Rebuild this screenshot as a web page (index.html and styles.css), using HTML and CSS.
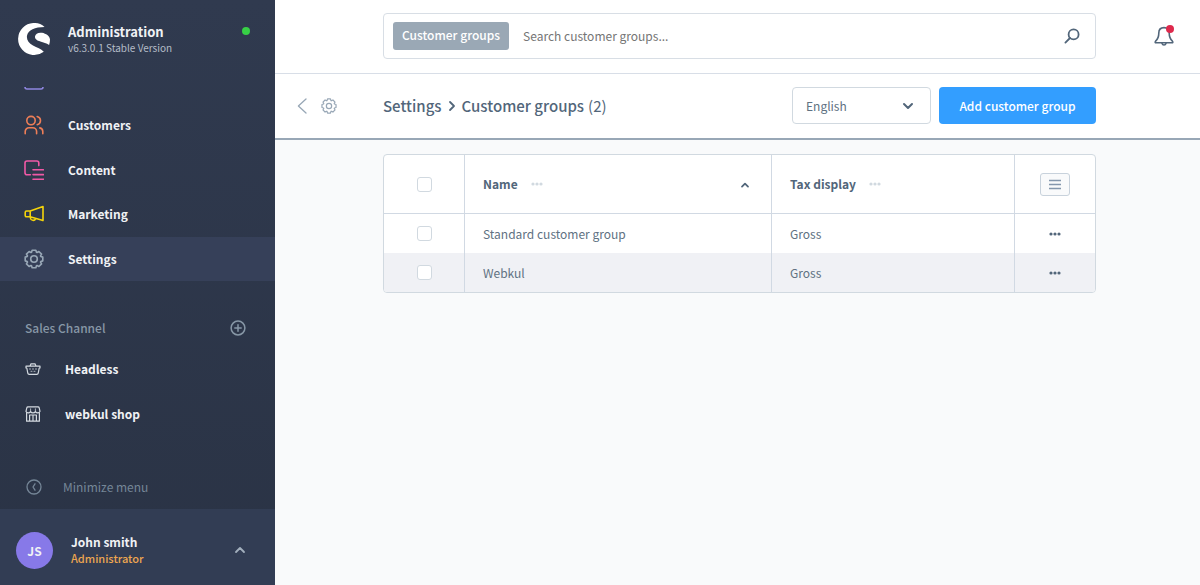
FILE: index.html
```html
<!DOCTYPE html>
<html lang="en">
  <head>
    <meta charset="UTF-8" />
    <meta name="viewport" content="width=device-width, initial-scale=1.0" />
    <title>Customer groups | Administration</title>
    <link rel="stylesheet" href="styles.css">
  </head>

  <body>
    <!-- Icons used more than once -->
    <svg class="sprite" aria-hidden="true">
      <symbol id="icon-gear" viewBox="0 0 20 20">
        <path d="M8.13 1.2 L11.87 1.2 L12.46 3.23 L13.04 3.47 L14.9 2.45 L17.55 5.1 L16.53 6.96 L16.77 7.54 L18.8 8.13 L18.8 11.87 L16.77 12.46 L16.53 13.04 L17.55 14.9 L14.9 17.55 L13.04 16.53 L12.46 16.77 L11.87 18.8 L8.13 18.8 L7.54 16.77 L6.96 16.53 L5.1 17.55 L2.45 14.9 L3.47 13.04 L3.23 12.46 L1.2 11.87 L1.2 8.13 L3.23 7.54 L3.47 6.96 L2.45 5.1 L5.1 2.45 L6.96 3.47 L7.54 3.23 Z" />
        <circle cx="10" cy="10" r="3.3" />
      </symbol>
      <symbol id="icon-dots" viewBox="0 0 12 4">
        <circle cx="2" cy="2" r="1.6" />
        <circle cx="6" cy="2" r="1.6" />
        <circle cx="10" cy="2" r="1.6" />
      </symbol>
    </svg>

    <div class="admin">
      <!-- Sidebar -->
      <aside class="sidebar">
        <div class="brand">
          <svg class="brand-logo" viewBox="0 0 32 32">
            <path d="M26.6 3.9 A16 16 0 1 0 25.8 28.7 C23 26 19 24.6 15 22.6 C10.5 20.4 8.4 16.5 9 12.8 C10 7 17 4 26.6 3.9 Z" />
            <path d="M17 13.4 C17.4 10.6 20.5 9.2 24 9.8 C28 10.6 31.8 13 32 16.6 C32 18.6 31.7 20.4 31.1 22 C28.5 20.1 25.5 19.2 22.4 18.4 C19 17.4 16.8 16 17 13.4 Z" />
          </svg>
          <div class="brand-text">
            <strong>Administration</strong>
            <span>v6.3.0.1 Stable Version</span>
          </div>
          <span class="status"></span>
        </div>

        <nav>
          <ul class="menu">
            <li class="menu-cut">
              <svg class="icon catalogue" viewBox="0 0 20 20"><rect x="1" y="1" width="18" height="18" rx="2" /></svg>
            </li>
            <li>
              <a href="#">
                <svg class="icon customers" viewBox="0 0 20 20">
                  <circle cx="7" cy="5.6" r="4.2" />
                  <path d="M1.2 18.8 V16.6 A3.8 3.8 0 0 1 5 12.8 H8.8 A3.8 3.8 0 0 1 12.6 16.6 V18.8 M13.2 1.5 A4.2 4.2 0 0 1 13.2 9.7 M15.8 12.9 A3.8 3.8 0 0 1 18.8 16.6 V18.8" />
                </svg>
                Customers
              </a>
            </li>
            <li>
              <a href="#">
                <svg class="icon content" viewBox="0 0 20 20">
                  <path d="M6.4 14.8 H3 A2 2 0 0 1 1 12.8 V3 A2 2 0 0 1 3 1 H12.8 A2 2 0 0 1 14.8 3 V5.6 M9 9.8 H19.4 M9 14.6 H19.4 M9 19.2 H19.4" />
                </svg>
                Content
              </a>
            </li>
            <li>
              <a href="#">
                <svg class="icon marketing" viewBox="0 0 20 20">
                  <path d="M6.2 7 L19 2.6 V16.6 L6.2 12.8 Z M6.2 7 H2.6 A1.4 1.4 0 0 0 1.2 8.4 V11.4 A1.4 1.4 0 0 0 2.6 12.8 H6.2 M6.4 12.8 V14 A2.7 2.7 0 0 0 11.6 14.6" />
                </svg>
                Marketing
              </a>
            </li>
            <li class="active">
              <a href="#">
                <svg class="icon settings"><use href="#icon-gear" /></svg>
                Settings
              </a>
            </li>
          </ul>
        </nav>

        <div class="channels-head">
          <h2>Sales Channel</h2>
          <button type="button" aria-label="Add sales channel">
            <svg viewBox="0 0 16 16"><circle cx="8" cy="8" r="6.9" /><path d="M8 4.8 V11.2 M4.8 8 H11.2" /></svg>
          </button>
        </div>
        <ul class="channels">
          <li>
            <a href="#">
              <svg viewBox="0 0 16 16">
                <path d="M1 5.2 H15 V7 H14.2 L13.2 12.2 A1.4 1.4 0 0 1 11.8 13.4 H4.2 A1.4 1.4 0 0 1 2.8 12.2 L1.8 7 H1 Z M5 5 L6 2.8 H10 L11 5" />
                <path class="thin" d="M4.5 8 H5.5 M7.5 8 H8.5 M10.5 8 H11.5 M6 10.3 H7 M9 10.3 H10" />
              </svg>
              Headless
            </a>
          </li>
          <li>
            <a href="#">
              <svg viewBox="0 0 16 16">
                <path d="M1.6 6.8 V15.2 H14.4 V6.8 M1 5.4 L1.8 1.8 Q2 .8 3 .8 H13 Q14 .8 14.2 1.8 L15 5.4 Q14.4 6.9 12.8 6.9 Q11.2 6.9 10.4 5.6 Q9.6 6.9 8 6.9 Q6.4 6.9 5.6 5.6 Q4.8 6.9 3.2 6.9 Q1.6 6.9 1 5.4 M4.6 15 V9 H11.4 V15 M8 9 V15" />
                <path class="thin" d="M5.6 2.8 V5.4 M10.4 2.8 V5.4" />
              </svg>
              webkul shop
            </a>
          </li>
        </ul>

        <button class="minimize" type="button">
          <svg viewBox="0 0 16 16"><circle cx="8" cy="8" r="7" /><path d="M9 4.8 L7 8 L9 11.2" /></svg>
          Minimize menu
        </button>

        <button class="user" type="button">
          <span class="avatar">JS</span>
          <span class="user-text">
            <strong>John smith</strong>
            <span>Administrator</span>
          </span>
          <svg viewBox="0 0 12 8"><path d="M2 6 L6 2 L10 6" /></svg>
        </button>
      </aside>

      <!-- Main area -->
      <div class="page">
        <header class="topbar">
          <form class="search">
            <label for="search">Customer groups</label>
            <input type="text" id="search" placeholder="Search customer groups..." />
            <button type="submit" aria-label="Search">
              <svg viewBox="0 0 16 16"><circle cx="9.6" cy="6.4" r="5" /><path d="M6 10 L1.4 14.6" /></svg>
            </button>
          </form>
          <button class="bell" type="button" aria-label="Notifications">
            <svg viewBox="0 0 20 20">
              <path d="M10 1.6 C6.6 1.6 4.8 4 4.8 7 C4.8 11.6 4 13 1.6 15.2 C.8 16.2 1.2 16.8 2 16.8 H18 C18.8 16.8 19.2 16.2 18.4 15.2 C16 13 15.2 11.6 15.2 7 C15.2 4 13.4 1.6 10 1.6 Z" />
              <path d="M8 17.4 Q8.4 19 10 19 Q11.6 19 12 17.4" />
            </svg>
            <span class="bell-dot"></span>
          </button>
        </header>

        <div class="page-head">
          <div class="page-tools">
            <a href="#" aria-label="Back"><svg class="back" viewBox="0 0 10 16"><path d="M9 1 L1.4 8 L9 15" /></svg></a>
            <a href="#" aria-label="Settings"><svg class="gear"><use href="#icon-gear" /></svg></a>
          </div>
          <h1>
            <a href="#">Settings</a>
            <svg viewBox="0 0 8 12"><path d="M2 2 L6 6 L2 10" /></svg>
            Customer groups
            <span>(2)</span>
          </h1>
          <div class="language">
            <select aria-label="Language">
              <option>English</option>
            </select>
            <svg viewBox="0 0 12 8"><path d="M2 2 L6 6 L10 2" /></svg>
          </div>
          <button class="add" type="button">Add customer group</button>
        </div>

        <main>
          <div class="grid">
            <table>
              <colgroup>
                <col class="col-check" />
                <col class="col-name" />
                <col class="col-tax" />
                <col class="col-actions" />
              </colgroup>
              <thead>
                <tr>
                  <th><input type="checkbox" aria-label="Select all" /></th>
                  <th>
                    <div class="th-inner">
                      Name
                      <svg class="dots"><use href="#icon-dots" /></svg>
                      <svg class="sort" viewBox="0 0 10 8"><path d="M2 5.6 L5 2.6 L8 5.6" /></svg>
                    </div>
                  </th>
                  <th>
                    <div class="th-inner">
                      Tax display
                      <svg class="dots"><use href="#icon-dots" /></svg>
                    </div>
                  </th>
                  <th>
                    <button class="list-settings" type="button" aria-label="List settings">
                      <svg viewBox="0 0 12 12"><path d="M0 2.5 H12 M0 6.5 H12 M0 10.5 H12" /></svg>
                    </button>
                  </th>
                </tr>
              </thead>
              <tbody>
                <tr>
                  <td><input type="checkbox" aria-label="Select Standard customer group" /></td>
                  <td>Standard customer group</td>
                  <td>Gross</td>
                  <td>
                    <button class="row-menu" type="button" aria-label="Actions"><svg><use href="#icon-dots" /></svg></button>
                  </td>
                </tr>
                <tr>
                  <td><input type="checkbox" aria-label="Select Webkul" /></td>
                  <td>Webkul</td>
                  <td>Gross</td>
                  <td>
                    <button class="row-menu" type="button" aria-label="Actions"><svg><use href="#icon-dots" /></svg></button>
                  </td>
                </tr>
              </tbody>
            </table>
          </div>
        </main>
      </div>
    </div>
  </body>
</html>
```
FILE: styles.css
```css
* {
  margin: 0;
  padding: 0;
  box-sizing: border-box;
}

body {
  font-family: "Noto Sans CJK SC", "Open Sans", sans-serif;
  font-size: 12px;
  line-height: 16px;
  color: #607182;
  background: #f9fafb;
}

a {
  color: inherit;
  text-decoration: none;
}

ul {
  list-style: none;
}

button {
  font: inherit;
  color: inherit;
  background: none;
  border: none;
  cursor: pointer;
}

svg {
  display: block;
  flex: none;
  fill: none;
  stroke: currentColor;
  stroke-linecap: round;
  stroke-linejoin: round;
}

.sprite {
  position: absolute;
  width: 0;
  height: 0;
}

.admin {
  display: flex;
  min-height: 100vh;
}

/* Sidebar */
.sidebar {
  width: 275px;
  flex: none;
  display: flex;
  flex-direction: column;
  color: #f0f2f5;
  background: linear-gradient(#303a4f, #2a3345);
}

.brand {
  display: flex;
  align-items: center;
  height: 87px;
  padding: 0 25px 10px 18px;
}

.brand-logo {
  width: 32px;
  height: 32px;
  margin-right: 18px;
  fill: #fff;
  stroke: none;
}

.brand-text {
  display: flex;
  flex-direction: column;
  flex: 1;
  padding-top: 2px;
}

.brand-text strong {
  font-size: 13px;
}

.brand-text span {
  font-size: 10px;
  color: #b4bcc8;
}

.status {
  width: 8px;
  height: 8px;
  margin-bottom: 16px;
  border-radius: 50%;
  background: #37d046;
}

.menu {
  display: flex;
  flex-direction: column;
  height: 194px;
}

.menu li {
  flex: 1;
}

.menu a {
  display: flex;
  align-items: center;
  gap: 24px;
  height: 100%;
  padding-left: 24px;
  font-weight: bold;
}

/* Scrolled entry, only its lower edge shows */
.menu .menu-cut {
  display: flex;
  align-items: flex-end;
  flex: none;
  height: 16px;
  padding: 0 0 13px 24px;
  overflow: hidden;
  clip-path: inset(0);
}

.menu .active {
  background: #364059;
}

.icon {
  width: 20px;
  height: 20px;
  stroke-width: 1.6;
}

.catalogue {
  color: #8f86e0;
}

.customers {
  color: #ee7e57;
}

.content {
  color: #f059a6;
}

.marketing {
  color: #f5d40a;
}

.settings {
  color: #98a7b6;
}

.channels-head {
  display: flex;
  align-items: center;
  justify-content: space-between;
  height: 38px;
  margin-top: 28px;
  padding: 0 29px 0 25px;
  color: #8797a6;
}

.channels-head h2 {
  font-size: 12px;
  font-weight: 500;
}

.channels-head svg {
  width: 16px;
  height: 16px;
  stroke-width: 1.5;
}

.channels {
  display: flex;
  flex-direction: column;
  height: 89px;
}

.channels li {
  flex: 1;
}

.channels a {
  display: flex;
  align-items: center;
  gap: 24px;
  height: 100%;
  padding-left: 25px;
  font-weight: bold;
}

.channels svg {
  width: 16px;
  height: 16px;
  color: #d3d9e0;
  stroke-width: 1.2;
}

.channels .thin {
  stroke-width: 0.8;
}

.minimize {
  display: flex;
  align-items: center;
  gap: 21px;
  height: 44px;
  margin-top: auto;
  padding-left: 26px;
  color: #758697;
}

.minimize svg {
  width: 16px;
  height: 16px;
  stroke-width: 1.3;
}

.user {
  display: flex;
  align-items: center;
  height: 76px;
  padding: 6px 29px 0 16px;
  text-align: left;
  background: #323d54;
}

.avatar {
  width: 37px;
  height: 37px;
  margin-right: 18px;
  border-radius: 50%;
  font-weight: bold;
  line-height: 37px;
  text-align: center;
  background: #8779e8;
}

.user-text {
  display: flex;
  flex-direction: column;
  flex: 1;
}

.user-text span {
  font-size: 11px;
  font-weight: 500;
  color: #eda650;
}

.user svg {
  width: 12px;
  height: 8px;
  color: #a3b0bd;
  stroke-width: 1.8;
}

/* Main area */
.page {
  flex: 1;
  min-width: 0;
}

.topbar {
  display: flex;
  align-items: center;
  height: 74px;
  padding: 0 26px 2px 108px;
  background: #fff;
  border-bottom: 1px solid #d8dee7;
}

.search {
  display: flex;
  align-items: center;
  flex: 1;
  height: 46px;
  padding: 0 15px 0 9px;
  border: 1px solid #d8dee5;
  border-radius: 4px;
}

.search label {
  height: 28px;
  padding: 0 9px;
  border-radius: 3px;
  font-weight: 500;
  line-height: 26px;
  color: #fff;
  background: #9aa8b5;
}

.search input {
  flex: 1;
  min-width: 0;
  padding: 0 14px;
  font: inherit;
  border: none;
  outline: none;
  background: none;
}

.search input::placeholder {
  color: #757575;
}

.search svg {
  width: 16px;
  height: 16px;
  color: #52667a;
  stroke-width: 1.8;
}

.bell {
  position: relative;
  margin-left: 58px;
  color: #52667a;
}

.bell svg {
  width: 20px;
  height: 20px;
  stroke-width: 1.6;
}

.bell-dot {
  position: absolute;
  top: -1px;
  right: 0;
  width: 8px;
  height: 8px;
  border-radius: 50%;
  background: #de294c;
}

.page-head {
  display: flex;
  align-items: center;
  height: 66px;
  padding: 0 104px 1px 0;
  background: #fff;
  border-bottom: 2px solid #98a7b6;
}

.page-tools {
  display: flex;
  align-items: center;
  gap: 14px;
  width: 108px;
  padding-left: 22px;
  color: #98a7b6;
}

.back {
  width: 10px;
  height: 16px;
  stroke-width: 1.3;
}

.gear {
  width: 16px;
  height: 16px;
  stroke-width: 1.5;
}

.page-head h1 {
  display: flex;
  align-items: center;
  flex: 1;
  font-size: 15px;
  font-weight: 500;
  white-space: nowrap;
  color: #52667a;
}

.page-head h1 svg {
  width: 8px;
  height: 12px;
  margin: 0 6px;
  stroke-width: 1.8;
}

.page-head h1 span {
  margin-left: 4px;
  font-weight: normal;
}

.language {
  position: relative;
  width: 139px;
  margin-right: 8px;
}

.language select {
  display: block;
  width: 100%;
  height: 37px;
  padding: 0 13px;
  font: inherit;
  color: inherit;
  appearance: none;
  background: #fff;
  border: 1px solid #d1d9e0;
  border-radius: 4px;
}

.language svg {
  position: absolute;
  top: 15px;
  right: 17px;
  width: 12px;
  height: 8px;
  color: #52667a;
  stroke-width: 2;
  pointer-events: none;
}

.add {
  width: 157px;
  height: 37px;
  border-radius: 4px;
  font-weight: 500;
  color: #fff;
  background: #339eff;
}

main {
  padding: 14px 104px 14px 108px;
}

/* Customer groups table */
.grid {
  border: 1px solid #d1d9e0;
  border-radius: 4px;
  overflow: hidden;
  background: #fff;
}

table {
  width: 100%;
  table-layout: fixed;
  border-spacing: 0;
}

.col-check {
  width: 80px;
}

.col-tax {
  width: 243px;
}

.col-actions {
  width: 81px;
}

th,
td {
  height: 39px;
  padding: 0 18px;
  text-align: left;
  border-left: 1px solid #d1d9e3;
}

th {
  height: 59px;
  color: #52667a;
  border-bottom: 1px solid #d1d9e3;
}

th:first-child,
td:first-child {
  text-align: center;
  border-left: none;
}

th:last-child,
td:last-child {
  text-align: center;
}

tbody tr:nth-child(even) {
  background: #f0f1f5;
}

.th-inner {
  display: flex;
  align-items: center;
}

.dots {
  width: 12px;
  height: 4px;
  margin-left: 13px;
  color: #d1d9e0;
  fill: currentColor;
  stroke: none;
}

.sort {
  width: 10px;
  height: 8px;
  margin: 2px 3px 0 auto;
  stroke-width: 1.8;
}

input[type="checkbox"] {
  display: block;
  width: 15px;
  height: 15px;
  margin: 0 auto;
  appearance: none;
  background: #fff;
  border: 1px solid #d1d9e0;
  border-radius: 3px;
}

.list-settings {
  display: flex;
  align-items: center;
  justify-content: center;
  width: 30px;
  height: 23px;
  margin: 0 auto;
  background: #f9fafb;
  border: 1px solid #c8d2dc;
  border-radius: 3px;
}

.list-settings svg {
  width: 12px;
  height: 12px;
  color: #8497ad;
  stroke-width: 1.6;
  stroke-linecap: butt;
}

.row-menu {
  display: block;
  margin: 0 auto;
  padding: 4px;
}

.row-menu svg {
  width: 12px;
  height: 4px;
  color: #52667a;
  fill: currentColor;
  stroke: none;
}
```
